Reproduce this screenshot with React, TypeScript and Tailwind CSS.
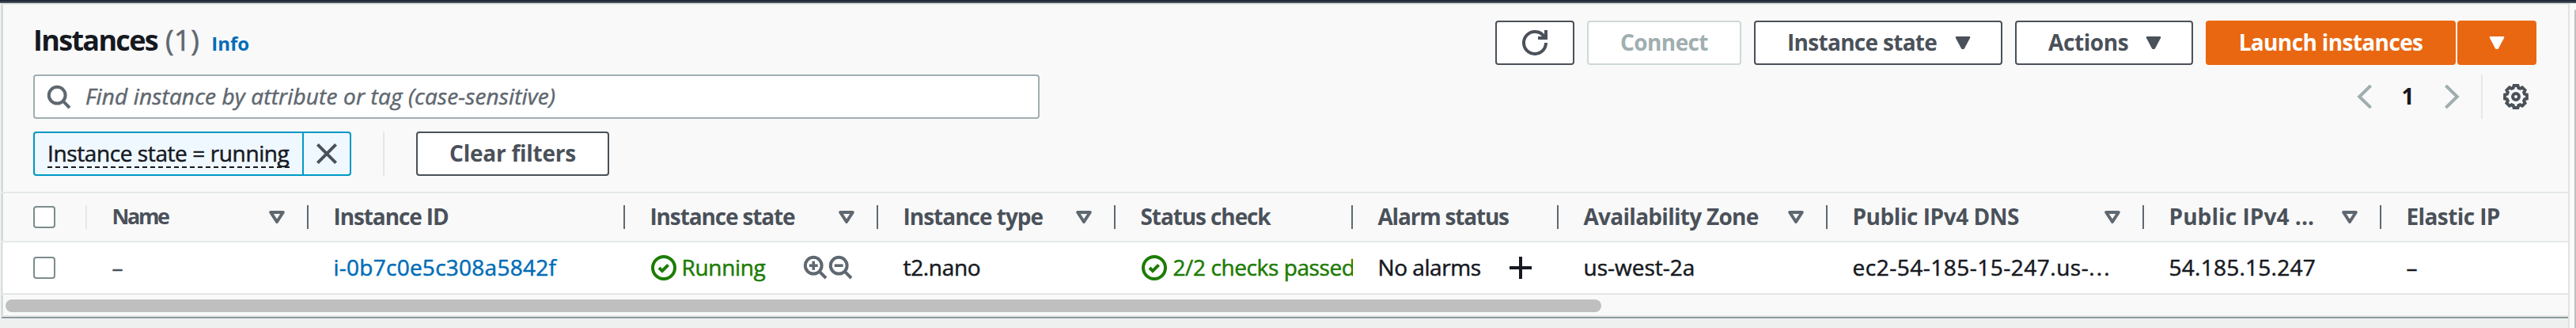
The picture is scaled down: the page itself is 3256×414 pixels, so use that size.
import React from "react";

type IconProps = { className?: string };

const Svg = ({ className = "size-8", children }: React.PropsWithChildren<IconProps>) => (
  <svg viewBox="0 0 16 16" fill="none" stroke="currentColor" strokeWidth={2} className={`shrink-0 ${className}`}>
    {children}
  </svg>
);

const SearchIcon = ({ className, sign }: IconProps & { sign?: "in" | "out" }) => (
  <Svg className={className}>
    <circle cx="7.1" cy="7.1" r="5.2" />
    <path d="M10.7 10.7L15 15" />
    {sign && <path d="M4.4 7.1h5.4" strokeWidth={1.8} />}
    {sign === "in" && <path d="M7.1 4.3v5.6" strokeWidth={1.8} />}
  </Svg>
);

const CheckIcon = () => (
  <Svg>
    <circle cx="8" cy="8" r="7" />
    <path d="M5 8l2 2 3.8-3.8" />
  </Svg>
);

const RefreshIcon = () => (
  <Svg>
    <path d="M10 5h5V0" />
    <path d="M15 8a6.957 6.957 0 01-7 7 6.957 6.957 0 01-7-7 6.957 6.957 0 017-7 6.87 6.87 0 016.3 4" />
  </Svg>
);

const gearPoints = Array.from({ length: 8 }, (_, i) => i * 45)
  .flatMap((a) => [
    [a - 17, 5.75],
    [a - 10, 7.05],
    [a + 10, 7.05],
    [a + 17, 5.75],
  ])
  .map(([a, r]) => {
    const t = (a * Math.PI) / 180;
    return `${(8 + r * Math.cos(t)).toFixed(2)},${(8 + r * Math.sin(t)).toFixed(2)}`;
  })
  .join(" ");

const GearIcon = () => (
  <Svg>
    <polygon points={gearPoints} strokeWidth={2} />
    <circle cx="8" cy="8" r="2" />
  </Svg>
);

const Caret = () => (
  <svg viewBox="0 0 20 16" className="h-4 w-5 shrink-0">
    <path d="M1.8 1.2h16.4L11 14.8H9z" fill="currentColor" stroke="currentColor" strokeWidth="2.2" strokeLinejoin="round" />
  </svg>
);

const SortIcon = () => (
  <svg viewBox="0 0 20 16" className="h-4 w-5 shrink-0 text-[#5f6870]">
    <path d="M2.2 2h15.6L10 14z" fill="none" stroke="currentColor" strokeWidth="4" strokeLinejoin="round" />
  </svg>
);

const Chevron = ({ className = "" }: IconProps) => (
  <svg viewBox="0 0 20 30" className={`h-[30px] w-5 shrink-0 text-[#a0aeb0] ${className}`}>
    <path d="M17.6 1L3.2 15l14.4 14" fill="none" stroke="currentColor" strokeWidth="4" />
  </svg>
);

const Button = ({ className = "", children }: React.PropsWithChildren<IconProps>) => (
  <button className={`flex h-14 items-center rounded-[4px] border-2 font-bold ${className}`}>{children}</button>
);

const Checkbox = () => <span className="block size-7 rounded-[4px] border-2 border-[#7d8c8d] bg-white" />;

const Rule = ({ className }: IconProps) => <span className={`shrink-0 ${className}`} />;

type Column = { label: string; width: string; tracking: string; sortable?: boolean; last?: boolean };

const columns: Column[] = [
  { label: "Name", width: "w-[280px]", tracking: "text-[27px] tracking-[-2.4px]", sortable: true },
  { label: "Instance ID", width: "w-[400px]", tracking: "tracking-[-1.1px]" },
  { label: "Instance state", width: "w-[320px]", tracking: "tracking-[-1.15px]", sortable: true },
  { label: "Instance type", width: "w-[300px]", tracking: "tracking-[-1px]", sortable: true },
  { label: "Status check", width: "w-[300px]", tracking: "tracking-[-1.1px]" },
  { label: "Alarm status", width: "w-[260px]", tracking: "tracking-[-1.2px]" },
  { label: "Availability Zone", width: "w-[340px]", tracking: "tracking-[-0.72px]", sortable: true },
  { label: "Public IPv4 DNS", width: "w-[400px]", tracking: "tracking-[-0.46px]", sortable: true },
  { label: "Public IPv4 ...", width: "w-[300px]", tracking: "tracking-[0.07px]", sortable: true },
  { label: "Elastic IP", width: "w-[236px]", tracking: "tracking-[-0.6px]", last: true },
];

const HeaderCell = ({ label, width, tracking, sortable, last }: Column) => (
  <div className={`flex h-full shrink-0 items-center justify-between pl-[31.5px] font-bold text-[#4a5159] ${width}`}>
    <span className={`pb-0.5 ${tracking}`}>{label}</span>
    <span className="flex items-center gap-7">
      {sortable && <SortIcon />}
      {!last && <Rule className="h-[30px] w-0.5 bg-[#5f6870]" />}
    </span>
  </div>
);

const Cell = ({ className = "", children }: React.PropsWithChildren<IconProps>) => (
  <div className={`flex h-full shrink-0 items-center overflow-hidden pl-[31.5px] ${className}`}>{children}</div>
);

export default function App() {
  return (
    <div className="flex h-[414px] w-[3256px] flex-col overflow-hidden bg-[#eef0f0] font-['Open_Sans',sans-serif] text-[28px] leading-9 whitespace-nowrap text-[#16191f]">
      <div className="h-0.5 shrink-0 bg-[#1f2937]" />
      <div className="h-0.5 shrink-0 bg-[#49525e]" />
      <div className="flex min-h-0 flex-1">
        <div className="w-0.5 shrink-0 bg-[#eef0f0]" />
        <main className="flex w-[3244px] shrink-0 flex-col">
          <section className="flex h-[396px] flex-col border-t-2 border-t-[#e6e9ea] bg-[#f9f9f9] shadow-[inset_1px_0_0_#bcc6c8,inset_2px_0_0_#e3e7e8]">
            <div className="flex h-[76px] items-center justify-between pt-5 pr-10 pl-10">
              <div className="flex items-baseline pb-0.5 leading-[40px]">
                <h1 className="text-[36px] font-bold tracking-[-1.69px]">Instances</h1>
                <span className="ml-2.5 text-[36px] tracking-[0.5px] text-[#5f6870] [-webkit-text-stroke:0.6px]">(1)</span>
                <a className="ml-[15px] text-[24px] font-bold text-[#006cb7]">Info</a>
              </div>
              <div className="flex gap-4 text-[#4a5159]">
                <Button className="w-[100px] justify-center border-[#4a5159] bg-white">
                  <RefreshIcon />
                </Button>
                <Button className="w-[195px] justify-center border-[#cfd8d8] bg-white text-[#a0aeb0]">
                  <span className="pb-0.5 tracking-[-0.6px]">Connect</span>
                </Button>
                <Button className="w-[314px] justify-between border-[#4a5159] bg-white pr-[38px] pl-10">
                  <span className="pb-0.5 tracking-[-0.7px]">Instance state</span>
                  <Caret />
                </Button>
                <Button className="w-[225px] justify-between border-[#4a5159] bg-white pr-[38px] pl-10">
                  <span className="pb-0.5 tracking-[-0.4px]">Actions</span>
                  <Caret />
                </Button>
                <div className="flex gap-0.5 text-white">
                  <Button className="w-[316px] justify-center border-[#e96711] bg-[#e96711]">
                    <span className="pb-0.5 tracking-[-0.63px]">Launch instances</span>
                  </Button>
                  <Button className="w-[100px] justify-center border-[#e96711] bg-[#e96711]">
                    <Caret />
                  </Button>
                </div>
              </div>
            </div>

            <div className="mt-3 flex h-14 items-center justify-between pr-[50px] pl-10">
              <div className="flex h-14 w-[1272px] items-center rounded-[4px] border-2 border-[#a0aeb0] bg-white pl-3.5 text-[#5f6870]">
                <SearchIcon />
                <span className="ml-[18px] pb-0.5 tracking-[0.15px] italic [-webkit-text-stroke:0.5px]">
                  Find instance by attribute or tag (case-sensitive)
                </span>
              </div>
              <div className="flex h-14 items-center">
                <Chevron />
                <span className="w-[90px] pr-px pb-0.5 text-center font-bold">1</span>
                <Chevron className="rotate-180" />
                <Rule className="mr-[26px] ml-[27px] h-14 w-0.5 bg-[#e4e8e8]" />
                <span className="text-[#4a5159]">
                  <GearIcon />
                </span>
              </div>
            </div>

            <div className="mt-4 flex h-14 items-center pl-10">
              <div className="flex h-14 w-[402px] rounded-[4px] border-2 border-[#0098c6] bg-[#f0f8ff]">
                <div className="flex w-[340px] items-start border-r-2 border-[#0098c6] pt-[9px] pl-4">
                  <span className="w-[306px] border-b-2 border-dashed border-[#16191f] leading-[33px] tracking-[-0.4px] [-webkit-text-stroke:0.5px]">
                    Instance state = running
                  </span>
                </div>
                <div className="flex flex-1 items-center justify-center text-[#4a5159]">
                  <Svg>
                    <path d="M2.2 2.2l11.6 11.6M13.8 2.2L2.2 13.8" />
                  </Svg>
                </div>
              </div>
              <Rule className="mr-10 ml-10 h-14 w-0.5 bg-[#e4e8e8]" />
              <Button className="w-[244px] justify-center border-[#4a5159] bg-white text-[#4a5159]">
                <span className="pb-0.5 tracking-[-0.25px]">Clear filters</span>
              </Button>
            </div>

            <div className="mt-5 flex h-16 shrink-0 items-center border-y-2 border-[#e6e9e9]">
              <div className="flex w-[108px] shrink-0 items-center justify-between pl-10">
                <Checkbox />
                <Rule className="h-[30px] w-0.5 bg-[#e4e8e8]" />
              </div>
              {columns.map((c) => (
                <HeaderCell key={c.label} {...c} />
              ))}
            </div>

            <div className="flex h-16 shrink-0 items-center bg-white shadow-[inset_1px_0_0_#bcc6c8] [-webkit-text-stroke:0.5px]">
              <div className="w-[108px] shrink-0 pl-10">
                <Checkbox />
              </div>
              <Cell className="w-[280px]">
                <span className="pb-0.5 text-[#4a5159]">–</span>
              </Cell>
              <Cell className="w-[400px] text-[#006cb7]">
                <span className="pb-0.5 tracking-[0.25px]">i-0b7c0e5c308a5842f</span>
              </Cell>
              <Cell className="w-[320px] text-[#1c7c04]">
                <span className="ml-px flex w-[191px] items-center gap-[7px]">
                  <CheckIcon />
                  <span className="pb-0.5 tracking-[-0.33px]">Running</span>
                </span>
                <span className="flex pb-0.5 text-[#5f6870]">
                  <SearchIcon sign="in" />
                  <SearchIcon sign="out" />
                </span>
              </Cell>
              <Cell className="w-[300px]">
                <span className="pb-0.5 tracking-[-0.33px]">t2.nano</span>
              </Cell>
              <Cell className="w-[300px] text-[#1c7c04]">
                <span className="ml-px flex items-center gap-2">
                  <CheckIcon />
                  <span className="pb-0.5 tracking-[-0.4px]">2/2 checks passed</span>
                </span>
              </Cell>
              <Cell className="w-[260px] justify-between pr-8">
                <span className="pb-0.5 tracking-[-0.45px]">No alarms</span>
                <Svg>
                  <path d="M8 1v14M1 8h14" />
                </Svg>
              </Cell>
              <Cell className="w-[340px]">
                <span className="pb-0.5">us-west-2a</span>
              </Cell>
              <Cell className="w-[400px]">
                <span className="pb-0.5 tracking-[0.5px]">
                  ec2-54-185-15-247.us-<span className="tracking-[2.2px]">...</span>
                </span>
              </Cell>
              <Cell className="w-[300px]">
                <span className="pb-0.5 tracking-[0.25px]">54.185.15.247</span>
              </Cell>
              <Cell className="flex-1">
                <span className="pb-0.5">–</span>
              </Cell>
            </div>

            <div className="flex h-[30px] shrink-0 items-start border-y-2 border-[#e4e6e6] pt-1.5 pl-[5px]">
              <div className="h-4 w-[2017px] rounded-full bg-[#bfbfbf]" />
            </div>
          </section>
          <div className="h-px shrink-0 bg-[#75878a]" />
          <div className="h-px shrink-0 bg-[#a9b4b6]" />
        </main>
        <div className="flex w-2.5 shrink-0 justify-end border-l-2 border-[#e1e3e3] bg-[#fafafa] pt-2">
          <div className="w-0.5 rounded-tl-full bg-[#bfbfbf]" />
        </div>
      </div>
    </div>
  );
}
